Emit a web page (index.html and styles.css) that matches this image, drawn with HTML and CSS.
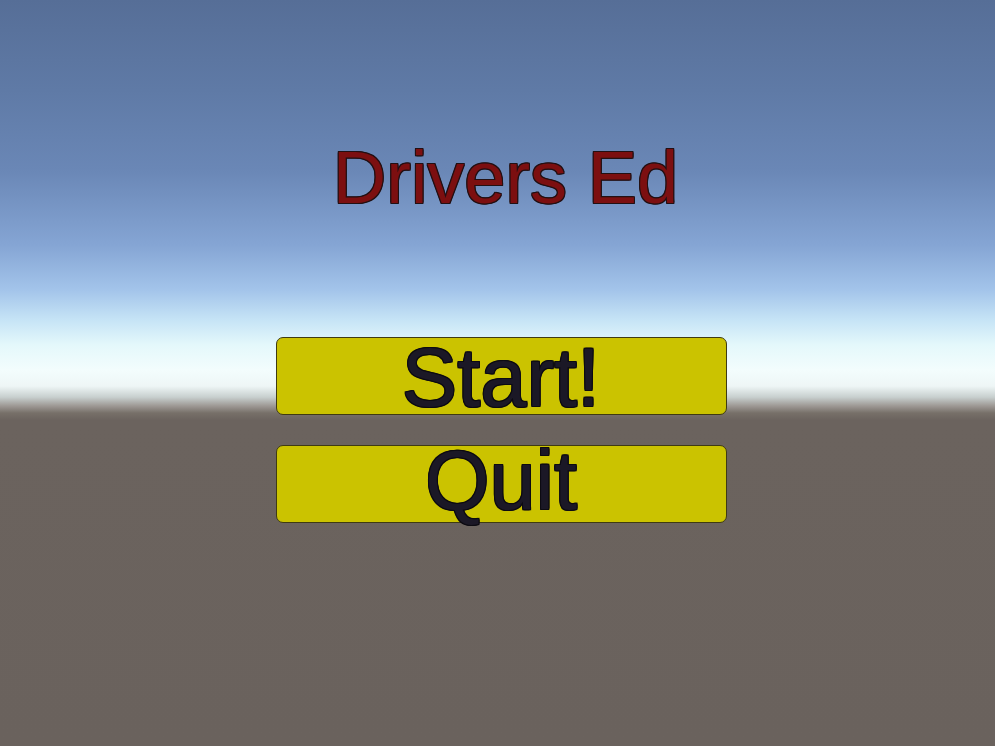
FILE: index.html
```html
<!DOCTYPE html>
<html lang="en">
<head>
  <meta charset="UTF-8">
  <meta name="viewport" content="width=device-width, initial-scale=1.0">
  <title>Drivers Ed</title>
  <link rel="stylesheet" href="styles.css">
</head>
<body>
  <div class="menu">
    <h1 class="title">Drivers Ed</h1>
    <div class="buttons">
      <button class="menu-btn start-btn">Start!</button>
      <button class="menu-btn quit-btn">Quit</button>
    </div>
  </div>
</body>
</html>
```

FILE: styles.css
```css
/* Main menu over the sky / ground backdrop */
html, body {
  height: 100%;
}
body {
  margin: 0;
  font-family: "Liberation Sans", Arial, sans-serif;
  background: linear-gradient(to bottom,
    #566e97 0px,
    #5f7aa6 90px,
    #6a87b6 170px,
    #85a5d4 245px,
    #a3c4ea 290px,
    #c6e4f6 320px,
    #e4f8fb 345px,
    #f3fdfd 370px,
    #eef6f6 386px,
    #c8d0cf 397px,
    #9d9894 406px,
    #777069 413px,
    #6b635e 420px,
    #6a625d 746px);
  overflow: hidden;
}
.menu {
  display: flex;
  flex-direction: column;
  align-items: center;
  padding-top: 141px;
  padding-left: 7px;
}
.title {
  margin: 0 0 0 9px;
  font-size: 74px;
  font-weight: normal;
  line-height: 1;
  color: #7c0f10;
  text-shadow:
    -1px 0 #231013, 1px 0 #231013, 0 -1px #231013, 0 1px #231013,
    -1px -1px #231013, 1px -1px #231013, -1px 1px #231013, 1px 1px #231013;
}
.buttons {
  display: flex;
  flex-direction: column;
  gap: 30px;
  margin-top: 122px;
}
.menu-btn {
  width: 451px;
  height: 78px;
  padding: 0;
  background-color: #cbc300;
  border: 1px solid #3f3b12;
  border-radius: 7px;
  font-family: inherit;
  font-size: 83px;
  line-height: 70px;
  color: #1b1826;
  overflow: visible;
  text-shadow:
    -1px 0 #0d0b12, 1px 0 #0d0b12, 0 -1px #0d0b12, 0 1px #0d0b12,
    -1px -1px #0d0b12, 1px -1px #0d0b12, -1px 1px #0d0b12, 1px 1px #0d0b12;
  cursor: pointer;
}
.start-btn {
  padding-top: 4px;
}
.quit-btn {
  padding-bottom: 10px;
}
```
